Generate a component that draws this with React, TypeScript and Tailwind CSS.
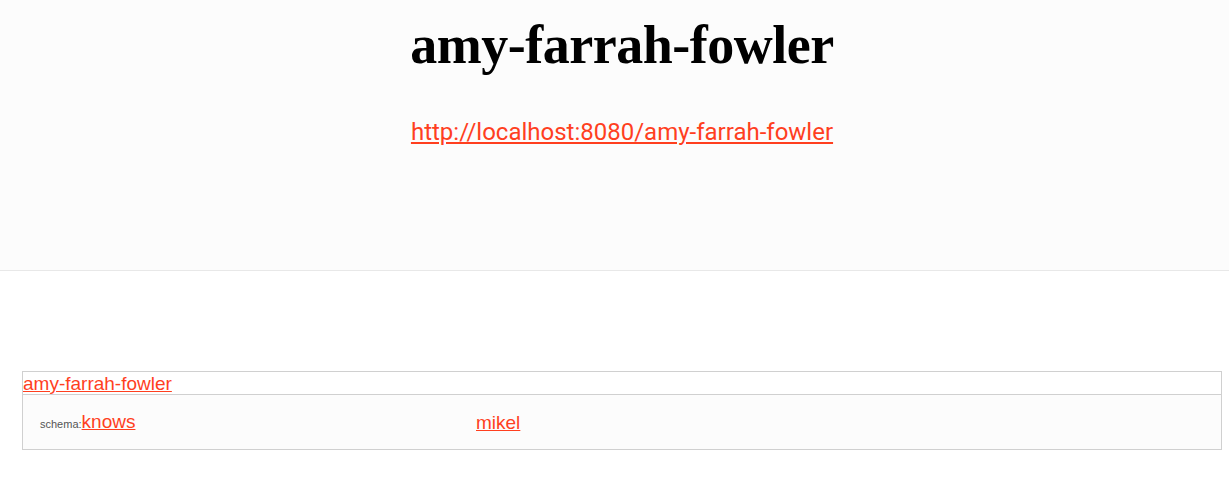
import React from 'react';

const linkCls = 'text-[#ff3f1f] underline';

export default function App() {
  return (
    <div className="min-h-screen overflow-hidden bg-white font-['Liberation_Sans',Arial,sans-serif]">
      <div className="w-[1244px]">
        <header className="h-[271px] border-b border-[#e8e8e8] bg-[#fcfcfc] text-center">
          <h1 className="pt-[11px] font-['Liberation_Serif','DejaVu_Serif',serif] text-[54px] font-bold leading-[68px] tracking-[-0.5px] text-black">
            amy-farrah-fowler
          </h1>
          <div className="mt-[39px] font-['Roboto',sans-serif] text-[24px] leading-[28px]">
            <a href="#" className={linkCls}>
              http://localhost:8080/amy-farrah-fowler
            </a>
          </div>
        </header>

        <main className="px-[22px] pt-[100px]">
          <div className="border border-[#d0d0d0]">
            <div className="h-[23px] border-b border-[#d0d0d0] bg-white text-[19px] leading-[23px]">
              <a href="#" className={linkCls}>
                amy-farrah-fowler
              </a>
            </div>
            <div className="flex h-[54px] items-center bg-[#fcfcfc] pl-[17px] pt-[1px]">
              <div className="w-[436px] leading-[22px]">
                <span className="text-[11px] text-[#555]">schema:</span>
                <a href="#" className={`${linkCls} text-[19px]`}>
                  knows
                </a>
              </div>
              <div className="text-[19px] leading-[22px]">
                <a href="#" className={linkCls}>
                  mikel
                </a>
              </div>
            </div>
          </div>
        </main>
      </div>
    </div>
  );
}
